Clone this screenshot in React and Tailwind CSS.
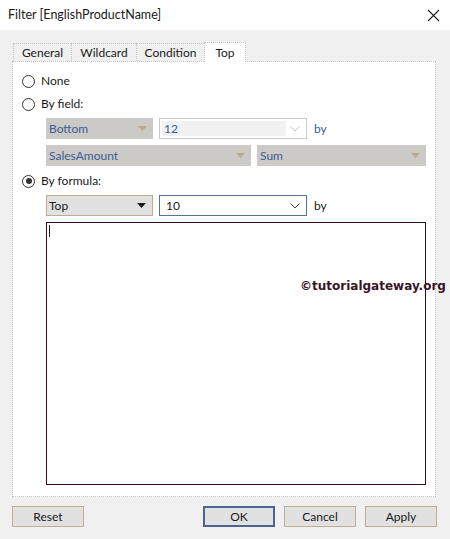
import React from 'react';

const FONT = { fontFamily: 'Lato, "Open Sans", sans-serif' };

const Radio = ({ checked, label }) => (
  <div className="flex items-center h-[20px] gap-[6px]">
    <span className="w-[13px] h-[13px] rounded-full border border-[#333333] bg-white flex items-center justify-center">
      {checked && <span className="w-[6px] h-[6px] rounded-full bg-[#333333]" />}
    </span>
    <span className="text-[12px] text-[#1a1a1a]">{label}</span>
  </div>
);

const DisabledSelect = ({ value, width }) => (
  <div
    className="h-[21px] bg-[#cccac7] flex items-center justify-between pl-[3px] pr-[6px]"
    style={{ width }}
  >
    <span className="text-[12px] text-[#3d5b93]">{value}</span>
    <svg width="9" height="5" viewBox="0 0 9 5">
      <path d="M0 0 L9 0 L4.5 5 Z" fill="#b9a98c" />
    </svg>
  </div>
);

const TabBtn = ({ label, active, width }) => (
  <div
    className={
      active
        ? 'h-[20px] bg-white border-t border-l border-r border-dotted border-[#c4c4c4] flex items-center justify-center -mb-px relative z-10'
        : 'h-[18px] border-t border-l border-dotted border-[#c4c4c4] flex items-center justify-center'
    }
    style={{ width }}
  >
    <span className="text-[12px] text-[#1a1a1a]">{label}</span>
  </div>
);

const Button = ({ label, primary }) => (
  <div
    className={
      primary
        ? 'w-[72px] h-[21px] bg-[#e1e1e1] border-2 border-[#4a6592] flex items-center justify-center'
        : 'w-[72px] h-[21px] bg-[#e1e1e1] border border-[#bfae91] flex items-center justify-center'
    }
  >
    <span className="text-[12px] text-[#1a1a1a]">{label}</span>
  </div>
);

export default function App() {
  return (
    <div className="w-[450px] h-[539px] bg-[#f0f0f0] flex flex-col relative overflow-hidden" style={FONT}>
      {/* title bar */}
      <div className="h-[30px] bg-white flex items-center justify-between pl-[8px] pr-[10px]">
        <span className="text-[12.5px] text-[#1a1a1a]">Filter [EnglishProductName]</span>
        <svg width="13" height="13" viewBox="0 0 13 13">
          <path d="M1 1 L12 12 M12 1 L1 12" stroke="#222" strokeWidth="1.1" />
        </svg>
      </div>

      <div className="flex flex-col px-[12px] pt-[12px]">
        {/* tabs */}
        <div className="flex items-end pl-px">
          <TabBtn label="General" width={58} />
          <TabBtn label="Wildcard" width={65} />
          <TabBtn label="Condition" width={68} />
          <TabBtn label="Top" width={42} active />
        </div>

        {/* panel */}
        <div className="w-[424px] h-[436px] bg-white border border-dotted border-[#c4c4c4] flex flex-col pl-[9px] pt-[9px]">
          <Radio label="None" />
          <div className="mt-[3px]">
            <Radio label="By field:" />
          </div>
          <div className="flex items-center mt-[4px] ml-[24px] gap-[6px]">
            <DisabledSelect value="Bottom" width={107} />
            <div className="w-[148px] h-[21px] border border-[#cacaca] bg-white p-[2px] flex items-center">
              <div className="flex-1 h-full bg-[#f0f1f0] flex items-center pl-[2px]">
                <span className="text-[12px] text-[#3d5b93]">12</span>
              </div>
              <svg className="mx-[4px]" width="10" height="6" viewBox="0 0 10 6">
                <path d="M0.5 0.5 L5 5 L9.5 0.5" stroke="#c2c2c2" fill="none" />
              </svg>
            </div>
            <span className="text-[12px] text-[#3d5b93] ml-[1px]">by</span>
          </div>
          <div className="flex items-center mt-[6px] ml-[24px] gap-[6px]">
            <DisabledSelect value="SalesAmount" width={205} />
            <DisabledSelect value="Sum" width={169} />
          </div>
          <div className="mt-[5px]">
            <Radio label="By formula:" checked />
          </div>
          <div className="flex items-center mt-[4px] ml-[24px] gap-[6px]">
            <div className="w-[107px] h-[21px] bg-[#e1e1e1] border border-[#bcae90] flex items-center justify-between pl-[2px] pr-[6px]">
              <span className="text-[12px] text-[#1a1a1a]">Top</span>
              <svg width="9" height="5" viewBox="0 0 9 5">
                <path d="M0 0 L9 0 L4.5 5 Z" fill="#1a1a1a" />
              </svg>
            </div>
            <div className="w-[148px] h-[21px] border border-[#5a6e96] bg-white flex items-center justify-between pl-[6px] pr-[6px]">
              <span className="text-[12px] text-[#1a1a1a]">10</span>
              <svg width="10" height="6" viewBox="0 0 10 6">
                <path d="M0.5 0.5 L5 5 L9.5 0.5" stroke="#444" fill="none" />
              </svg>
            </div>
            <span className="text-[12px] text-[#1a1a1a] ml-[1px]">by</span>
          </div>
          <div className="mt-[6px] ml-[24px] w-[380px] h-[263px] border border-[#3c0a1e] bg-white pl-[2px] pt-[2px]">
            <div className="w-px h-[12px] bg-[#222]" />
          </div>
        </div>

        {/* buttons */}
        <div className="flex items-center mt-[9px]">
          <Button label="Reset" />
          <div className="flex-1" />
          <div className="flex gap-[9px] mr-[1px]">
            <Button label="OK" primary />
            <Button label="Cancel" />
            <Button label="Apply" />
          </div>
        </div>
      </div>

      {/* watermark */}
      <div
        className="absolute left-[300px] top-[277px] text-[12px] font-bold text-[#3b1427] whitespace-nowrap"
        style={{ fontFamily: '"DejaVu Sans", sans-serif' }}
      >
        ©tutorialgateway.org
      </div>
    </div>
  );
}
